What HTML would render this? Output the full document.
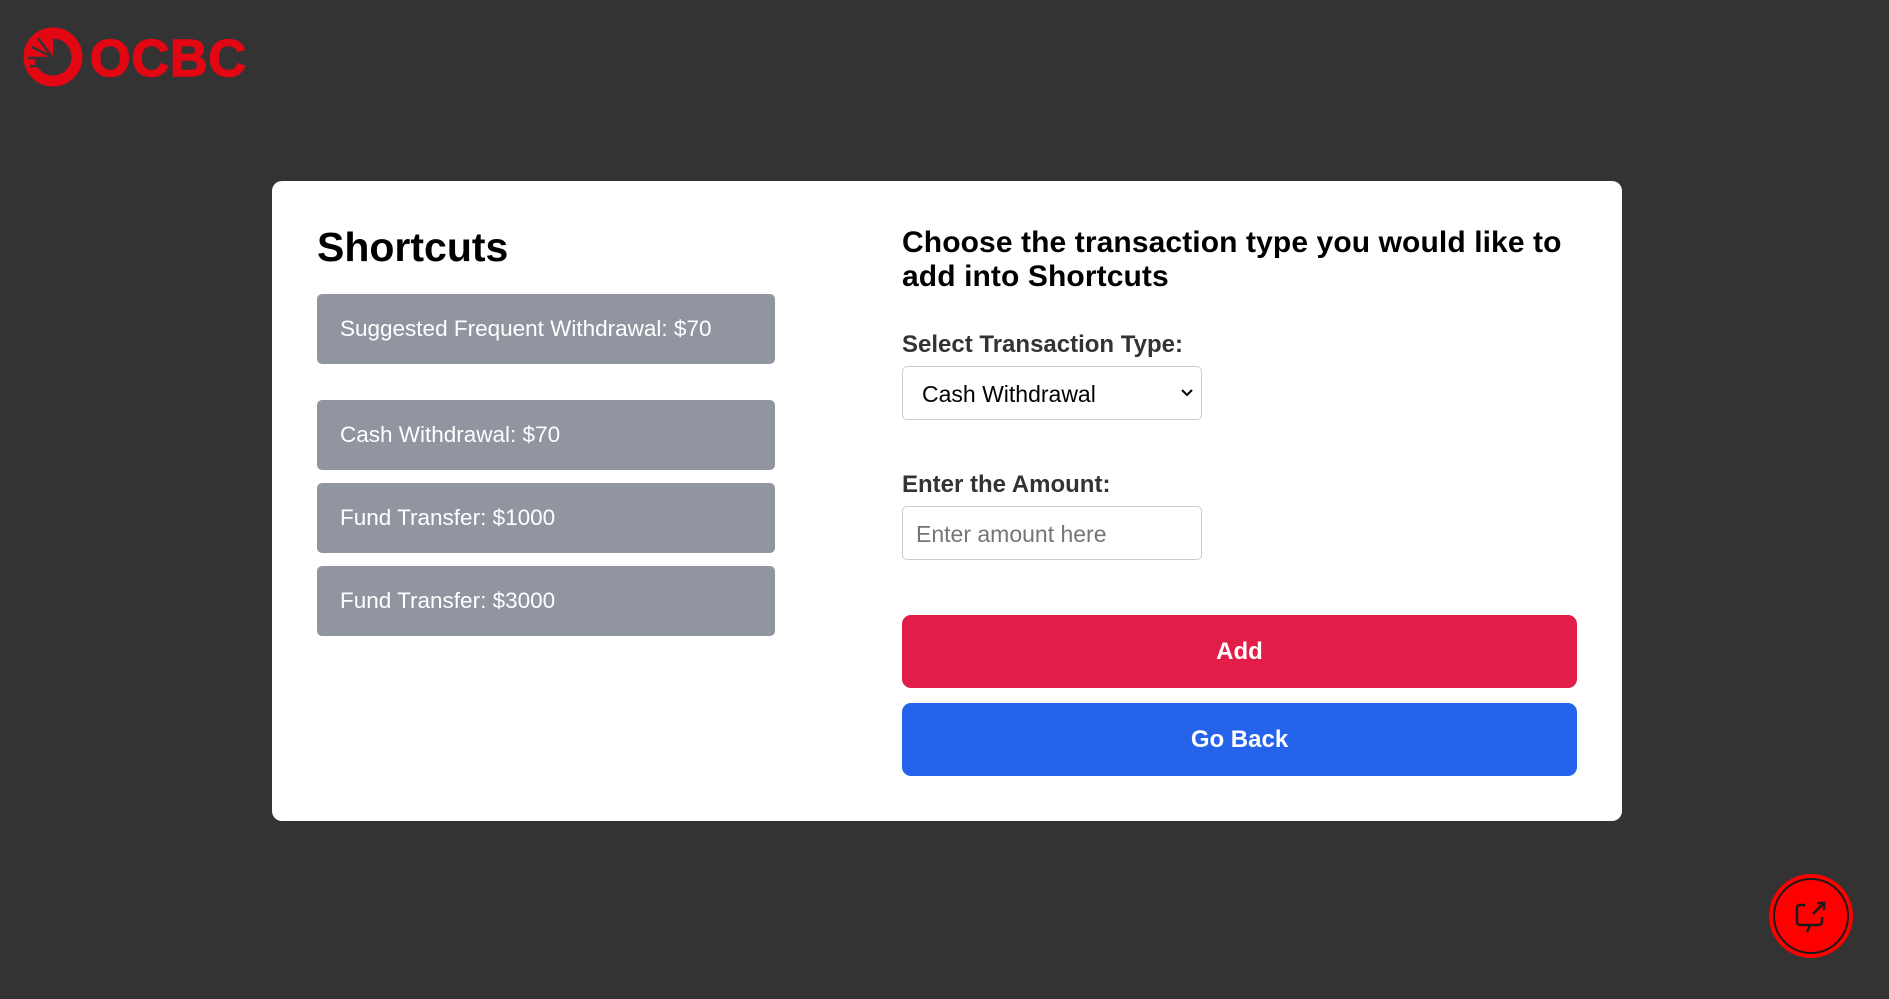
<!DOCTYPE html>
<html><head><style>
*{box-sizing:border-box;margin:0;padding:0}
body{width:1889px;height:999px;background:#333;font-family:"Liberation Sans",Arial,sans-serif;position:relative;overflow:hidden}
.card{position:absolute;left:272px;top:181px;width:1350px;height:640px;background:#fff;border-radius:10px}
h1{position:absolute;left:317px;top:224px;font-size:41px;font-weight:bold;color:#000}
.sc{position:absolute;left:317px;width:458px;height:70px;background:#9195a0;border-radius:5px;color:#fff;font-size:22.5px;padding-left:23px;line-height:70px}
h2{position:absolute;left:902px;top:226px;font-size:30px;letter-spacing:0.1px;line-height:34px;font-weight:bold;color:#000;width:700px}
.lbl{position:absolute;left:902px;font-size:24px;font-weight:bold;color:#333}
.box{position:absolute;left:902px;width:300px;height:54px;border:1px solid #ccc;border-radius:5px;font-size:23px}
.btn{position:absolute;left:902px;width:675px;height:73px;border-radius:9px;color:#fff;font-weight:bold;font-size:24px;text-align:center;line-height:73px}
</style></head><body>
<svg style="position:absolute;left:22px;top:26px" width="225" height="62" viewBox="0 0 225 62">
<circle cx="31" cy="31" r="24" fill="none" stroke="#e30613" stroke-width="11"/>
<path d="M7 31 A24 24 0 0 1 31 7 L31 31 Z" fill="#e30613"/>
<g stroke="#333" stroke-width="2.5"><line x1="10" y1="21" x2="30" y2="31"/><line x1="16" y1="12" x2="30" y2="31"/><line x1="6" y1="32" x2="30" y2="32"/><line x1="8" y1="40" x2="28" y2="40"/></g>
<text x="68" y="50" font-family="Liberation Sans" font-weight="bold" font-size="52" fill="#e30613" stroke="#e30613" stroke-width="1.5" letter-spacing="1">OCBC</text>
</svg>
<div class="card"></div>
<h1>Shortcuts</h1>
<div class="sc" style="top:294px">Suggested Frequent Withdrawal: $70</div>
<div class="sc" style="top:400px">Cash Withdrawal: $70</div>
<div class="sc" style="top:483px">Fund Transfer: $1000</div>
<div class="sc" style="top:566px">Fund Transfer: $3000</div>
<h2>Choose the transaction type you would like to<br>add into Shortcuts</h2>
<div class="lbl" style="top:331px">Select Transaction Type:</div>
<div class="box" style="top:366px;color:#000;padding:14px 0 0 19px">Cash Withdrawal
<svg style="position:absolute;right:7px;top:21px" width="14" height="10"><path d="M2 2 L7 7 L12 2" stroke="#000" stroke-width="2" fill="none"/></svg></div>
<div class="lbl" style="top:471px">Enter the Amount:</div>
<div class="box" style="top:506px;color:#757575;padding:14px 0 0 13px">Enter amount here</div>
<div class="btn" style="top:615px;background:#e11d48">Add</div>
<div class="btn" style="top:703px;background:#2563eb">Go Back</div>
<svg style="position:absolute;left:1768px;top:873px" width="86" height="86" viewBox="0 0 86 86">
<circle cx="43" cy="43" r="42" fill="#ff0000"/>
<circle cx="43" cy="43" r="37" fill="none" stroke="#1a1a1a" stroke-width="2"/>
<path d="M37 32 H32 a3 3 0 0 0 -3 3 V49 a3 3 0 0 0 3 3 H42 L39 59 M42 52 H51 a3 3 0 0 0 3 -3 V44" stroke="#1a1a1a" stroke-width="2.5" fill="none"/>
<path d="M45 41 L56 30 M49 30 H56 V37" stroke="#1a1a1a" stroke-width="2.5" fill="none"/>
</svg>
</body></html>
